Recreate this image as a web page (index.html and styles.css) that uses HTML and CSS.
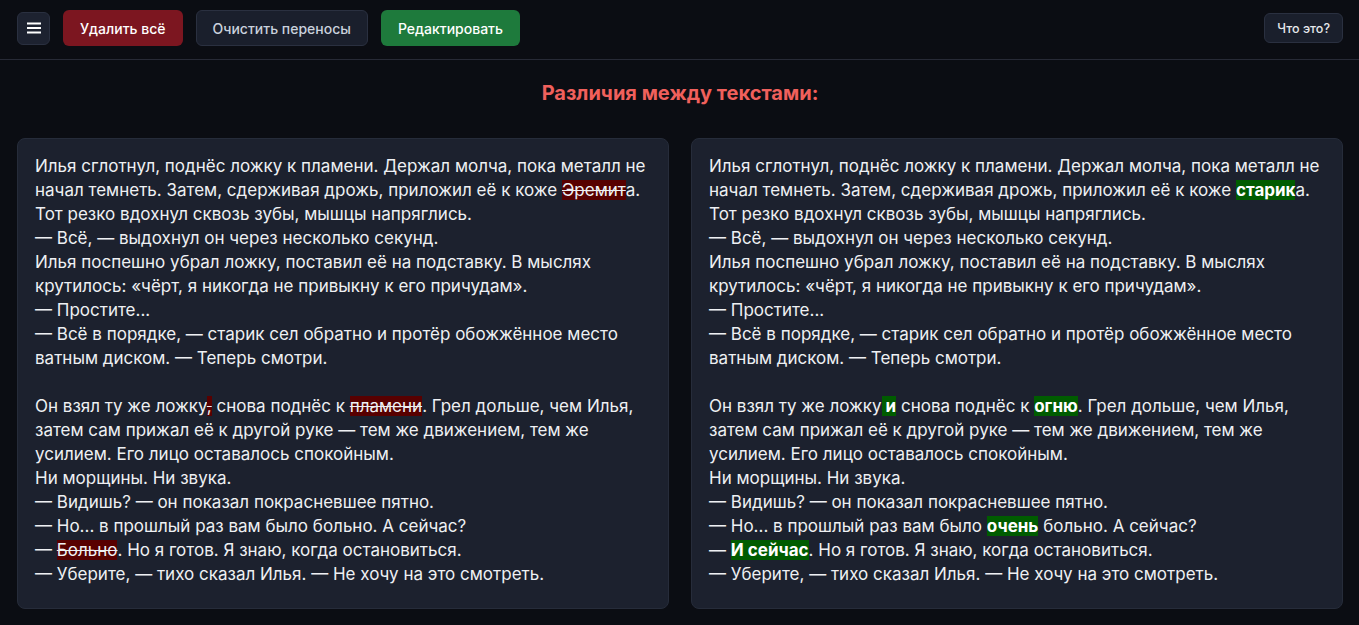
FILE: index.html
```html
<!DOCTYPE html>
<html lang="ru">
<head>
<meta charset="utf-8">
<title>Различия между текстами</title>
<link rel="stylesheet" href="styles.css">
</head>
<body>
<header class="toolbar">
  <div class="tools">
    <button class="btn btn-menu" aria-label="Меню">
      <svg width="14" height="12" viewBox="0 0 14 12"><rect x="0" y="0.5" width="14" height="2" fill="#fff"/><rect x="0" y="5" width="14" height="2" fill="#fff"/><rect x="0" y="9.5" width="14" height="2" fill="#fff"/></svg>
    </button>
    <button class="btn btn-red">Удалить всё</button>
    <button class="btn btn-dark">Очистить переносы</button>
    <button class="btn btn-green">Редактировать</button>
  </div>
  <button class="btn btn-help">Что это?</button>
</header>
<main class="content">
  <h2 class="title">Различия между текстами:</h2>
  <div class="panels">
    <div class="panel">Илья сглотнул, поднёс ложку к пламени. Держал молча, пока металл не начал темнеть. Затем, сдерживая дрожь, приложил её к коже <del>Эремит</del>а.
Тот резко вдохнул сквозь зубы, мышцы напряглись.
— Всё, — выдохнул он через несколько секунд.
Илья поспешно убрал ложку, поставил её на подставку. В мыслях крутилось: «чёрт, я никогда не привыкну к его причудам».
— Простите...
— Всё в порядке, — старик сел обратно и протёр обожжённое место ватным диском. — Теперь смотри.

Он взял ту же ложку<del>,</del> снова поднёс к <del>пламени</del>. Грел дольше, чем Илья, затем сам прижал её к другой руке — тем же движением, тем же усилием. Его лицо оставалось спокойным.
Ни морщины. Ни звука.
— Видишь? — он показал покрасневшее пятно.
— Но... в прошлый раз вам было больно. А сейчас?
— <del>Больно</del>. Но я готов. Я знаю, когда остановиться.
— Уберите, — тихо сказал Илья. — Не хочу на это смотреть.</div>
    <div class="panel">Илья сглотнул, поднёс ложку к пламени. Держал молча, пока металл не начал темнеть. Затем, сдерживая дрожь, приложил её к коже <ins>старик</ins>а.
Тот резко вдохнул сквозь зубы, мышцы напряглись.
— Всё, — выдохнул он через несколько секунд.
Илья поспешно убрал ложку, поставил её на подставку. В мыслях крутилось: «чёрт, я никогда не привыкну к его причудам».
— Простите...
— Всё в порядке, — старик сел обратно и протёр обожжённое место ватным диском. — Теперь смотри.

Он взял ту же ложку<ins> и</ins> снова поднёс к <ins>огню</ins>. Грел дольше, чем Илья, затем сам прижал её к другой руке — тем же движением, тем же усилием. Его лицо оставалось спокойным.
Ни морщины. Ни звука.
— Видишь? — он показал покрасневшее пятно.
— Но... в прошлый раз вам было <ins>очень</ins> больно. А сейчас?
— <ins>И сейчас</ins>. Но я готов. Я знаю, когда остановиться.
— Уберите, — тихо сказал Илья. — Не хочу на это смотреть.</div>
  </div>
</main>
</body>
</html>
```
FILE: styles.css
```css
* { box-sizing: border-box; }
html, body { margin: 0; padding: 0; }
body {
  background: #0b0d13;
  color: #e5e7eb;
  font-family: Inter, "Noto Sans", sans-serif;
  height: 625px;
  overflow: hidden;
}
.toolbar {
  display: flex;
  align-items: center;
  justify-content: space-between;
  height: 60px;
  padding: 0 16px 0 17px;
  border-bottom: 1px solid #272a36;
}
.tools {
  display: flex;
  align-items: center;
  gap: 13px;
  margin-top: -3px;
}
.btn {
  font-family: Inter, "Noto Sans", sans-serif;
  font-size: 14px;
  font-weight: 500;
  border-radius: 6px;
  height: 36px;
  padding: 0 16px;
  border: 1px solid transparent;
  color: #fff;
  cursor: pointer;
}
.btn-menu {
  width: 33px;
  height: 33px;
  padding: 0;
  display: flex;
  align-items: center;
  justify-content: center;
  background: #1d2230;
  border-color: #2a3040;
}
.btn-red { background: #7c1620; }
.btn-dark { background: #1a1f2c; border-color: #2a3040; color: #c9d1dc; }
.btn-green { background: #1e7a3c; }
.btn-help {
  height: 30px;
  font-size: 12.5px;
  padding: 0 12px;
  background: #1a1f2c;
  border-color: #2a3040;
  color: #e5e7eb;
  margin-top: -3px;
}
.content {
  padding: 0 16px 0 17px;
}
.title {
  margin: 19px 0 0;
  text-align: center;
  font-size: 20px;
  font-weight: 700;
  color: #f0605c;
  line-height: 28px;
}
.panels {
  display: grid;
  grid-template-columns: 1fr 1fr;
  gap: 22px;
  margin-top: 31px;
}
.panel {
  background: #1c212e;
  border: 1px solid #262c3a;
  border-radius: 8px;
  padding: 15px 17px 25px;
  white-space: pre-wrap;
  font-size: 17px;
  line-height: 24px;
  color: #eef0f3;
  height: 471px;
}
del {
  background: #580000;
  text-decoration: line-through;
  color: #eef0f3;
}
ins {
  background: #005c00;
  text-decoration: none;
  font-weight: 700;
  color: #fff;
}
```
